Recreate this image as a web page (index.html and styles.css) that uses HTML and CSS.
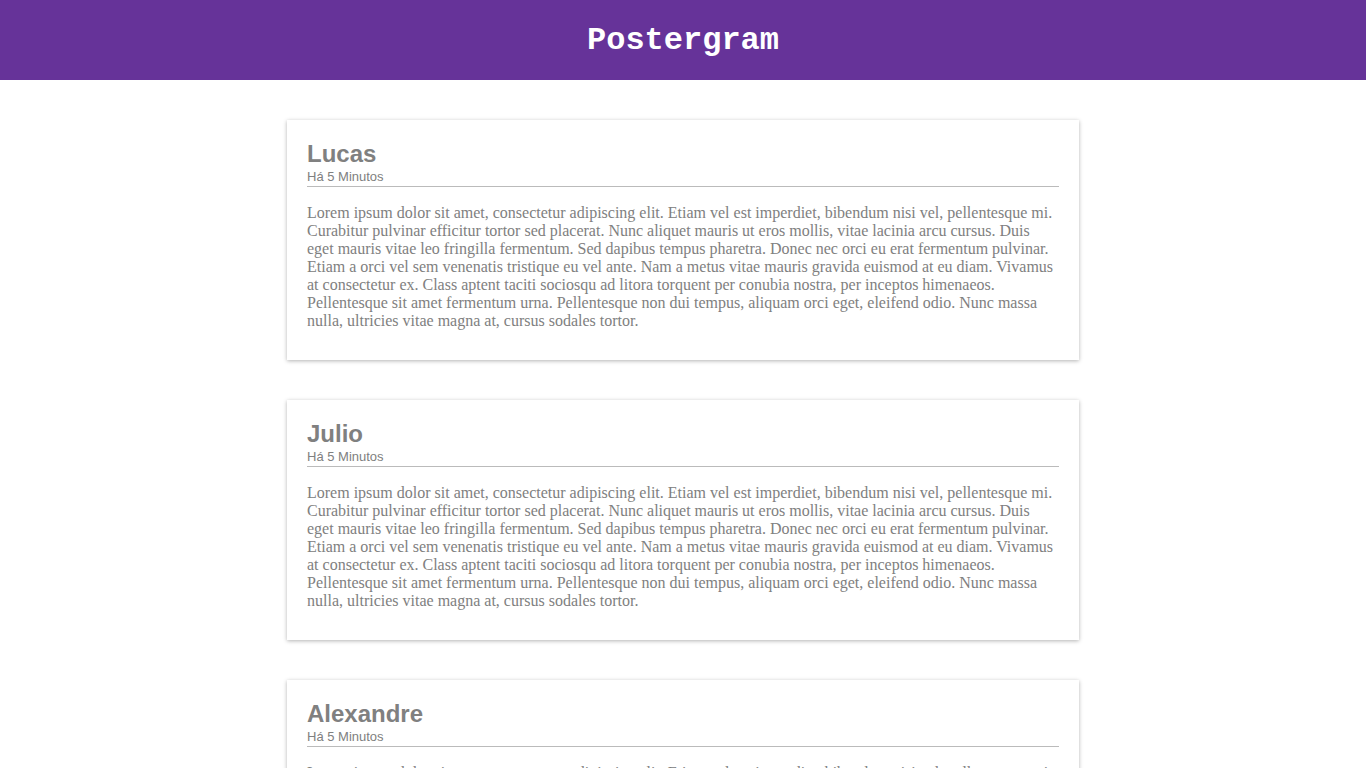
FILE: index.html
```html
<!DOCTYPE html>
<html lang="pt">
<head>
<meta charset="utf-8">
<title>Postergram</title>
<link rel="stylesheet" href="styles.css">
</head>
<body>
<header class="topbar">
  <h1 class="brand">Postergram</h1>
</header>
<main class="feed">
  <article class="post">
    <div class="post-head">
      <h2 class="post-author">Lucas</h2>
      <span class="post-time">Há 5 Minutos</span>
    </div>
    <p class="post-body">Lorem ipsum dolor sit amet, consectetur adipiscing elit. Etiam vel est imperdiet, bibendum nisi vel, pellentesque mi. Curabitur pulvinar efficitur tortor sed placerat. Nunc aliquet mauris ut eros mollis, vitae lacinia arcu cursus. Duis eget mauris vitae leo fringilla fermentum. Sed dapibus tempus pharetra. Donec nec orci eu erat fermentum pulvinar. Etiam a orci vel sem venenatis tristique eu vel ante. Nam a metus vitae mauris gravida euismod at eu diam. Vivamus at consectetur ex. Class aptent taciti sociosqu ad litora torquent per conubia nostra, per inceptos himenaeos. Pellentesque sit amet fermentum urna. Pellentesque non dui tempus, aliquam orci eget, eleifend odio. Nunc massa nulla, ultricies vitae magna at, cursus sodales tortor.</p>
  </article>
  <article class="post">
    <div class="post-head">
      <h2 class="post-author">Julio</h2>
      <span class="post-time">Há 5 Minutos</span>
    </div>
    <p class="post-body">Lorem ipsum dolor sit amet, consectetur adipiscing elit. Etiam vel est imperdiet, bibendum nisi vel, pellentesque mi. Curabitur pulvinar efficitur tortor sed placerat. Nunc aliquet mauris ut eros mollis, vitae lacinia arcu cursus. Duis eget mauris vitae leo fringilla fermentum. Sed dapibus tempus pharetra. Donec nec orci eu erat fermentum pulvinar. Etiam a orci vel sem venenatis tristique eu vel ante. Nam a metus vitae mauris gravida euismod at eu diam. Vivamus at consectetur ex. Class aptent taciti sociosqu ad litora torquent per conubia nostra, per inceptos himenaeos. Pellentesque sit amet fermentum urna. Pellentesque non dui tempus, aliquam orci eget, eleifend odio. Nunc massa nulla, ultricies vitae magna at, cursus sodales tortor.</p>
  </article>
  <article class="post">
    <div class="post-head">
      <h2 class="post-author">Alexandre</h2>
      <span class="post-time">Há 5 Minutos</span>
    </div>
    <p class="post-body">Lorem ipsum dolor sit amet, consectetur adipiscing elit. Etiam vel est imperdiet, bibendum nisi vel, pellentesque mi. Curabitur pulvinar efficitur tortor sed placerat. Nunc aliquet mauris ut eros mollis, vitae lacinia arcu cursus. Duis eget mauris vitae leo fringilla fermentum. Sed dapibus tempus pharetra. Donec nec orci eu erat fermentum pulvinar. Etiam a orci vel sem venenatis tristique eu vel ante. Nam a metus vitae mauris gravida euismod at eu diam. Vivamus at consectetur ex. Class aptent taciti sociosqu ad litora torquent per conubia nostra, per inceptos himenaeos. Pellentesque sit amet fermentum urna. Pellentesque non dui tempus, aliquam orci eget, eleifend odio. Nunc massa nulla, ultricies vitae magna at, cursus sodales tortor.</p>
  </article>
</main>
</body>
</html>
```

FILE: styles.css
```css
html, body {
  margin: 0;
  padding: 0;
  background: #ffffff;
}

body {
  font-family: "Liberation Serif", "Times New Roman", serif;
}

.topbar {
  height: 80px;
  background: #663399;
  display: flex;
  align-items: center;
  justify-content: center;
}

.brand {
  margin: 0;
  color: #ffffff;
  font-family: "Liberation Mono", "Courier New", monospace;
  font-size: 32px;
  font-weight: bold;
}

.feed {
  display: flex;
  flex-direction: column;
  align-items: center;
  gap: 40px;
  padding: 40px 0;
}

.post {
  width: 792px;
  box-sizing: border-box;
  padding: 20px 20px 14px;
  background: #ffffff;
  box-shadow: 0 1px 4px rgba(0, 0, 0, 0.3);
  color: #808080;
}

.post-head {
  display: flex;
  flex-direction: column;
  border-bottom: 1px solid #bbbbbb;
  font-family: "Liberation Sans", Arial, sans-serif;
}

.post-author {
  margin: 0;
  font-size: 24px;
  font-weight: bold;
  line-height: 28px;
}

.post-time {
  font-size: 13px;
  line-height: 17px;
  padding-bottom: 1px;
}

.post-body {
  margin: 17px 0 16px;
  font-size: 16px;
  line-height: 18px;
}
```
